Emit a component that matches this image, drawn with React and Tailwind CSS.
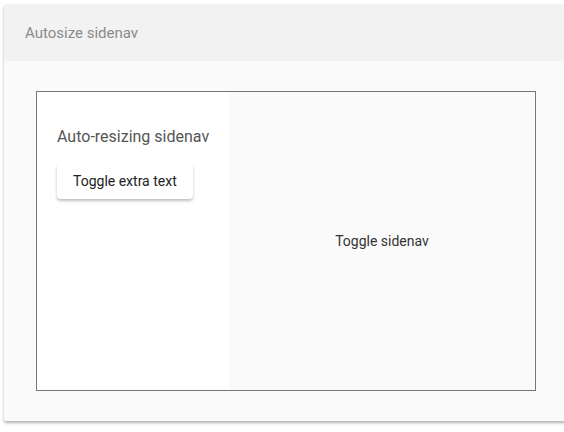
export default function App() {
  return (
    <div className="min-h-[432px] bg-white pt-[4px] pl-[4px] font-['Roboto',sans-serif]">
      <div className="w-[564px] overflow-hidden rounded-[2px] bg-[#fafafa] shadow-[0_2px_3px_rgba(0,0,0,0.3)]">
        <div className="flex h-[57px] items-center bg-[#f2f2f2] px-[21px] pt-[2px] text-[15px] text-[#8a8a8a]">
          Autosize sidenav
        </div>
        <div className="px-[32px] pt-[30px] pb-[30px]">
          <div className="flex h-[300px] w-[500px] border border-[#777]">
            <div className="w-[192px] bg-white pl-[20px] pt-[33px]">
              <p className="text-[16px] leading-[24px] text-[#555]">Auto-resizing sidenav</p>
              <button className="mt-[14px] h-[36px] rounded-[4px] bg-white px-[16px] text-[14px] font-normal text-[#222] shadow-[0_2px_3px_rgba(0,0,0,0.25)]">
                Toggle extra text
              </button>
            </div>
            <div className="flex flex-1 items-center justify-center bg-[#fafafa] text-[14px] font-normal text-[#333]">
              Toggle sidenav
            </div>
          </div>
        </div>
      </div>
    </div>
  );
}
